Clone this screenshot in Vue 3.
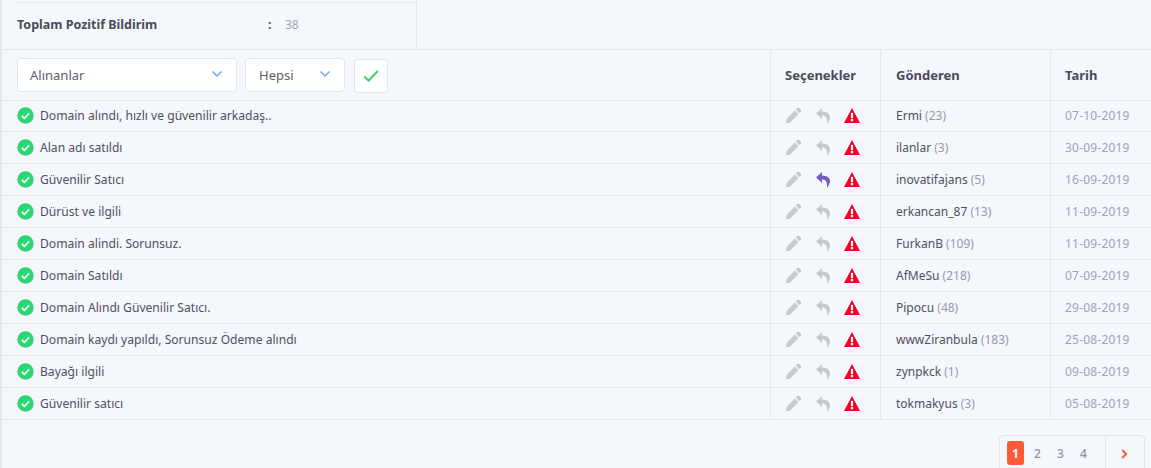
<script setup>
const rows = [
  { text: 'Domain alındı, hızlı ve güvenilir arkadaş..', user: 'Ermi', count: 23, date: '07-10-2019' },
  { text: 'Alan adı satıldı', user: 'ilanlar', count: 3, date: '30-09-2019' },
  { text: 'Güvenilir Satıcı', user: 'inovatifajans', count: 5, date: '16-09-2019', replied: true },
  { text: 'Dürüst ve ilgili', user: 'erkancan_87', count: 13, date: '11-09-2019' },
  { text: 'Domain alindi. Sorunsuz.', user: 'FurkanB', count: 109, date: '11-09-2019' },
  { text: 'Domain Satıldı', user: 'AfMeSu', count: 218, date: '07-09-2019' },
  { text: 'Domain Alındı Güvenilir Satıcı.', user: 'Pipocu', count: 48, date: '29-08-2019' },
  { text: 'Domain kaydı yapıldı, Sorunsuz Ödeme alındı', user: 'wwwZiranbula', count: 183, date: '25-08-2019' },
  { text: 'Bayağı ilgili', user: 'zynpkck', count: 1, date: '09-08-2019' },
  { text: 'Güvenilir satıcı', user: 'tokmakyus', count: 3, date: '05-08-2019' },
]
const pages = [1, 2, 3, 4]
</script>

<template>
  <div class="page">
    <section class="summary">
      <div class="summary-inner">
        <span class="summary-label">Toplam Pozitif Bildirim</span>
        <span class="summary-colon">:</span>
        <span class="summary-value">38</span>
      </div>
    </section>

    <div class="table-head">
      <div class="filters">
        <div class="select select-wide">
          <span>Alınanlar</span>
          <svg class="chevron" viewBox="0 0 12 8"><path d="M1.5 1.5 6 6l4.5-4.5" /></svg>
        </div>
        <div class="select select-small">
          <span>Hepsi</span>
          <svg class="chevron" viewBox="0 0 12 8"><path d="M1.5 1.5 6 6l4.5-4.5" /></svg>
        </div>
        <button class="apply">
          <svg viewBox="0 0 16 13"><path d="M1.2 6.500 5.600 10.700 14.800 1" /></svg>
        </button>
      </div>
      <div class="cell-options th">Seçenekler</div>
      <div class="cell-user th">Gönderen</div>
      <div class="cell-date th">Tarih</div>
    </div>

    <div v-for="(row, i) in rows" :key="row.user" :class="['row', { 'row-first': i === 0 }]">
      <div class="cell-text">
        <svg class="ok" viewBox="0 0 18 18">
          <circle cx="9" cy="9" r="8.7" />
          <path d="M5 9.4 7.8 12 13 6.6" />
        </svg>
        <span>{{ row.text }}</span>
      </div>
      <div class="cell-options actions">
        <svg class="ic-edit" viewBox="0 0 18 18">
          <path d="M13 1.2c.7-.7 1.7-.7 2.400 0l1.400 1.400c.7.7.7 1.700 0 2.400L15.300 6.500 11.500 2.700ZM10.500 3.700 14.300 7.500 5.500 16.300 1 17.300 2 12.500Z" />
        </svg>
        <svg :class="['ic-reply', { active: row.replied }]" viewBox="0 0 14 16">
          <path d="M6 0 0 5.500 6 11V7.500c3.500 0 5.600 2 5 8.500 2-2.700 3-4.900 3-7 0-3.700-3.300-5.300-8-5.500Z" />
        </svg>
        <svg class="ic-warn" viewBox="0 0 16 15">
          <path d="M8 0 16 15H0Z" />
          <rect x="6.900" y="4.800" width="2.200" height="5.400" fill="#fff" />
          <rect x="6.900" y="11" width="2.200" height="2.200" fill="#fff" />
        </svg>
      </div>
      <div class="cell-user">{{ row.user }} <span class="count">({{ row.count }})</span></div>
      <div class="cell-date date">{{ row.date }}</div>
    </div>

    <div class="pager-wrap">
      <nav class="pager">
        <div class="pages">
          <span v-for="p in pages" :key="p" :class="['num', { current: p === 1 }]">{{ p }}</span>
        </div>
        <div class="next">
          <svg viewBox="0 0 7 10"><path d="M1.200 1 5.300 5 1.200 9" /></svg>
        </div>
      </nav>
    </div>
  </div>
</template>

<style>
html, body {
  margin: 0;
  background: #f4f7fb;
}
</style>

<style scoped>
.page {
  width: 1151px;
  height: 468px;
  overflow: hidden;
  box-sizing: border-box;
  border-left: 2px solid #e4e7ec;
  background: #f4f7fb;
  color: #50505f;
  font-family: "Noto Sans", "Open Sans", sans-serif;
  font-size: 12px;
}

.summary {
  width: 415px;
  height: 49px;
  box-sizing: border-box;
  padding: 2px 0 0 15px;
  border-right: 1px solid #e4e7ec;
}
.summary-inner {
  display: flex;
  align-items: center;
  height: 43px;
  border-top: 1px solid #e4e7ec;
}
.summary-label {
  width: 251px;
  font-size: 12.5px;
  font-weight: 700;
  color: #4b4b5a;
}
.summary-colon {
  width: 17px;
  font-weight: 700;
}
.summary-value {
  color: #a5a5b8;
}

.table-head,
.row {
  display: flex;
  border-top: 1px solid #e4e7ec;
}
.table-head {
  height: 50px;
}
.filters {
  width: 768px;
  box-sizing: border-box;
  padding: 8px 0 0 15px;
  display: flex;
  gap: 8px;
}
.select {
  height: 34px;
  box-sizing: border-box;
  display: flex;
  align-items: center;
  justify-content: space-between;
  padding: 0 13px;
  background: #fff;
  border: 1px solid #e2e5ea;
  border-radius: 4px;
  font-size: 13px;
  color: #5d5d6e;
}
.select-wide {
  width: 220px;
  padding-left: 12px;
}
.select-small {
  width: 100px;
}
.chevron {
  width: 12px;
  height: 8px;
  margin-top: -3px;
  fill: none;
  stroke: #6aa9f4;
  stroke-width: 1.500;
}
.apply {
  width: 34px;
  height: 34px;
  margin: 1px 0 0 1px;
  padding: 0;
  display: flex;
  align-items: center;
  justify-content: center;
  background: #fff;
  border: 1px solid #e2e5ea;
  border-radius: 4px;
}
.apply svg {
  width: 16px;
  height: 13px;
  fill: none;
  stroke: #3ad264;
  stroke-width: 2;
}

.th {
  display: flex;
  align-items: center;
  font-size: 13px;
  font-weight: 700;
  color: #4b4b5a;
}
.cell-options,
.cell-user,
.cell-date {
  box-sizing: border-box;
  border-left: 1px solid #e4e7ec;
  padding-left: 14px;
}
.cell-options {
  width: 110px;
}
.cell-user {
  width: 170px;
  padding-left: 15px;
}
.cell-date {
  width: 101px;
  padding-left: 14px;
}

.row {
  height: 31px;
}
.row-first {
  height: 30px;
}
.row > div {
  display: flex;
  align-items: center;
}
.row-first > div {
  padding-bottom: 1px;
}
.cell-text {
  width: 768px;
  box-sizing: border-box;
  padding-left: 14.5px;
  gap: 6.5px;
  font-size: 12.1px;
}
.ok {
  width: 17px;
  height: 17px;
  flex: none;
}
.ok circle {
  fill: #2ed573;
}
.ok path {
  fill: none;
  stroke: #fff;
  stroke-width: 1.800;
}
.actions svg {
  flex: none;
}
.ic-edit {
  width: 17px;
  height: 17px;
  fill: #c9c9c9;
}
.ic-reply {
  width: 14px;
  height: 16px;
  margin-left: 14px;
  fill: #c9c9c9;
}
.ic-reply.active {
  fill: #7a5cc4;
}
.ic-warn {
  width: 16px;
  height: 15px;
  margin-left: 14px;
  fill: #fa0028;
}
.cell-user {
  white-space: pre;
}
.count {
  color: #9a9aa8;
}
.date {
  color: #a0a4b4;
  letter-spacing: 0.2px;
}

.pager-wrap {
  border-top: 1px solid #e4e7ec;
  display: flex;
  justify-content: flex-end;
  padding: 15px 6px 0 0;
}
.pager {
  display: flex;
  width: 146px;
  height: 40px;
  box-sizing: border-box;
  border: 1px solid #e2e5ea;
  border-radius: 4px;
}
.pages {
  width: 106px;
  box-sizing: border-box;
  padding: 5px 0 0 7px;
  display: flex;
  gap: 6px;
  border-right: 1px solid #e2e5ea;
}
.num {
  width: 17px;
  height: 24px;
  display: flex;
  align-items: center;
  justify-content: center;
  color: #8f93a8;
  font-weight: 500;
}
.num.current {
  margin-right: -1px;
  background: #fd5a36;
  color: #fff;
  font-weight: 700;
  border-radius: 3px;
}
.next {
  flex: 1;
  padding: 13px 0 0 15px;
}
.next svg {
  display: block;
  width: 7px;
  height: 10px;
  fill: none;
  stroke: #fd5a36;
  stroke-width: 1.800;
}
</style>
